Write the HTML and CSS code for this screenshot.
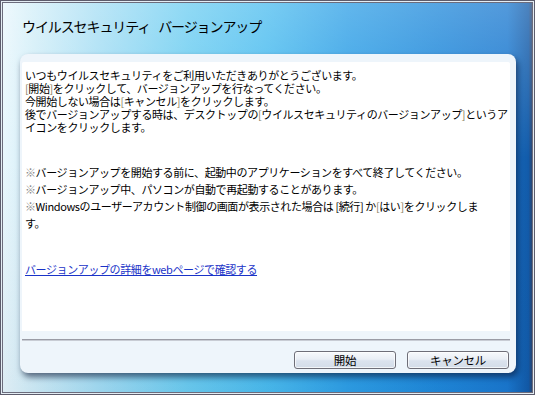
FILE: index.html
```html
<!DOCTYPE html>
<html lang="ja">
<head>
<meta charset="utf-8">
<link rel="stylesheet" href="styles.css">
</head>
<body>
<div class="window">
  <div class="title">ウイルスセキュリティ バージョンアップ</div>
  <div class="panel">
    <div class="content">
      <p class="para1">
        <span class="line">いつもウイルスセキュリティをご利用いただきありがとうございます。</span>
        <span class="line"><span class="br">[</span>開始<span class="br">]</span>をクリックして、バージョンアップを行なってください。</span>
        <span class="line">今開始しない場合は<span class="br">[</span>キャンセル<span class="br">]</span>をクリックします。</span>
        <span class="line">後でバージョンアップする時は、デスクトップの<span class="br">[</span>ウイルスセキュリティのバージョンアップ<span class="br">]</span>というア</span>
        <span class="line">イコンをクリックします。</span>
      </p>
      <p class="para2">
        <span class="line"><span class="mark">※</span>バージョンアップを開始する前に、起動中のアプリケーションをすべて終了してください。</span>
        <span class="line"><span class="mark">※</span>バージョンアップ中、パソコンが自動で再起動することがあります。</span>
        <span class="line"><span class="mark">※</span>Windowsのユーザーアカウント制御の画面が表示された場合は [続行] か<span class="br">[</span>はい<span class="br">]</span>をクリックしま</span>
        <span class="line">す。</span>
      </p>
      <a class="link" href="#">バージョンアップの詳細をwebページで確認する</a>
    </div>
    <div class="footer">
      <div class="sep"></div>
      <div class="buttons">
        <button class="btn">開始</button>
        <button class="btn">キャンセル</button>
      </div>
    </div>
  </div>
</div>
</body>
</html>
```
FILE: styles.css
```css
* { box-sizing: border-box; }
html, body { margin: 0; padding: 0; }
body {
  width: 535px;
  height: 395px;
  overflow: hidden;
  font-family: "Noto Sans CJK JP", "Noto Sans", sans-serif;
}
.window {
  width: 535px;
  height: 395px;
  border: 1px solid #5c5c6c;
  box-shadow: inset 0 0 0 1px #e4edf4, inset 0 0 0 2px #6c6c7c;
  background:
    linear-gradient(180deg, rgba(255,255,255,0.25) 0%, rgba(255,255,255,0) 40%, rgba(0,40,90,0.05) 100%),
    linear-gradient(90deg, #eaf7fc 0%, #d2eef8 6%, #a6def4 18%, #6ccdf1 35%, #4bbcef 50%, #2e9fe6 65%, #1f88da 82%, #1a78cf 95%, #125aa8 99%, #3a3a50 100%);
  display: flex;
  flex-direction: column;
  padding: 0 18px 21px 19px;
}
.title {
  height: 53px;
  padding: 15px 0 0 2px;
  font-size: 14px;
  line-height: 20px;
  letter-spacing: -1.1px;
  word-spacing: 6px;
  color: #000;
}
.panel {
  flex: 1;
  background: #eef5fb;
  border-radius: 8px;
  box-shadow: 2px 4px 6px rgba(10, 20, 50, 0.6);
  padding: 8px 6px 0 2px;
  display: flex;
  flex-direction: column;
}
.content {
  flex: 1;
  background: #ffffff;
  padding: 7px 0 0 3px;
  font-size: 11px;
  letter-spacing: -0.4px;
  color: #000;
  border-radius: 2px 2px 0 0;
}
.content p { margin: 0; }
.line { display: block; white-space: nowrap; }
.para1 { line-height: 13px; }
.para2 { line-height: 17px; margin-top: 30px !important; }
.br, .mark { display: inline-block; }
.br { color: #8a7f60; }
.mark { color: #8a8a8a; }
.link {
  display: inline-block;
  margin-top: 29px;
  line-height: 17px;
  color: #1a33c8;
  text-decoration: underline;
}
.footer {
  height: 42px;
  display: flex;
  flex-direction: column;
}
.sep {
  margin-top: 8px;
  height: 2px;
  border-top: 1px solid #9a9ca6;
  border-bottom: 1px solid #c8ccd4;
}
.buttons {
  display: flex;
  justify-content: flex-end;
  gap: 11px;
  margin-top: 10px;
  padding-right: 1px;
}
.btn {
  width: 102px;
  height: 18px;
  padding: 0;
  border: 1px solid #6e6e78;
  border-radius: 3px;
  background: linear-gradient(180deg, #f7f9fc 0%, #e9eef5 45%, #dbe3ee 55%, #d3dce8 100%);
  box-shadow: inset 0 0 0 1px rgba(255,255,255,0.7);
  font-family: "Noto Sans CJK JP", sans-serif;
  font-size: 11.5px;
  line-height: 16px;
  color: #000;
  letter-spacing: -0.3px;
}
```
